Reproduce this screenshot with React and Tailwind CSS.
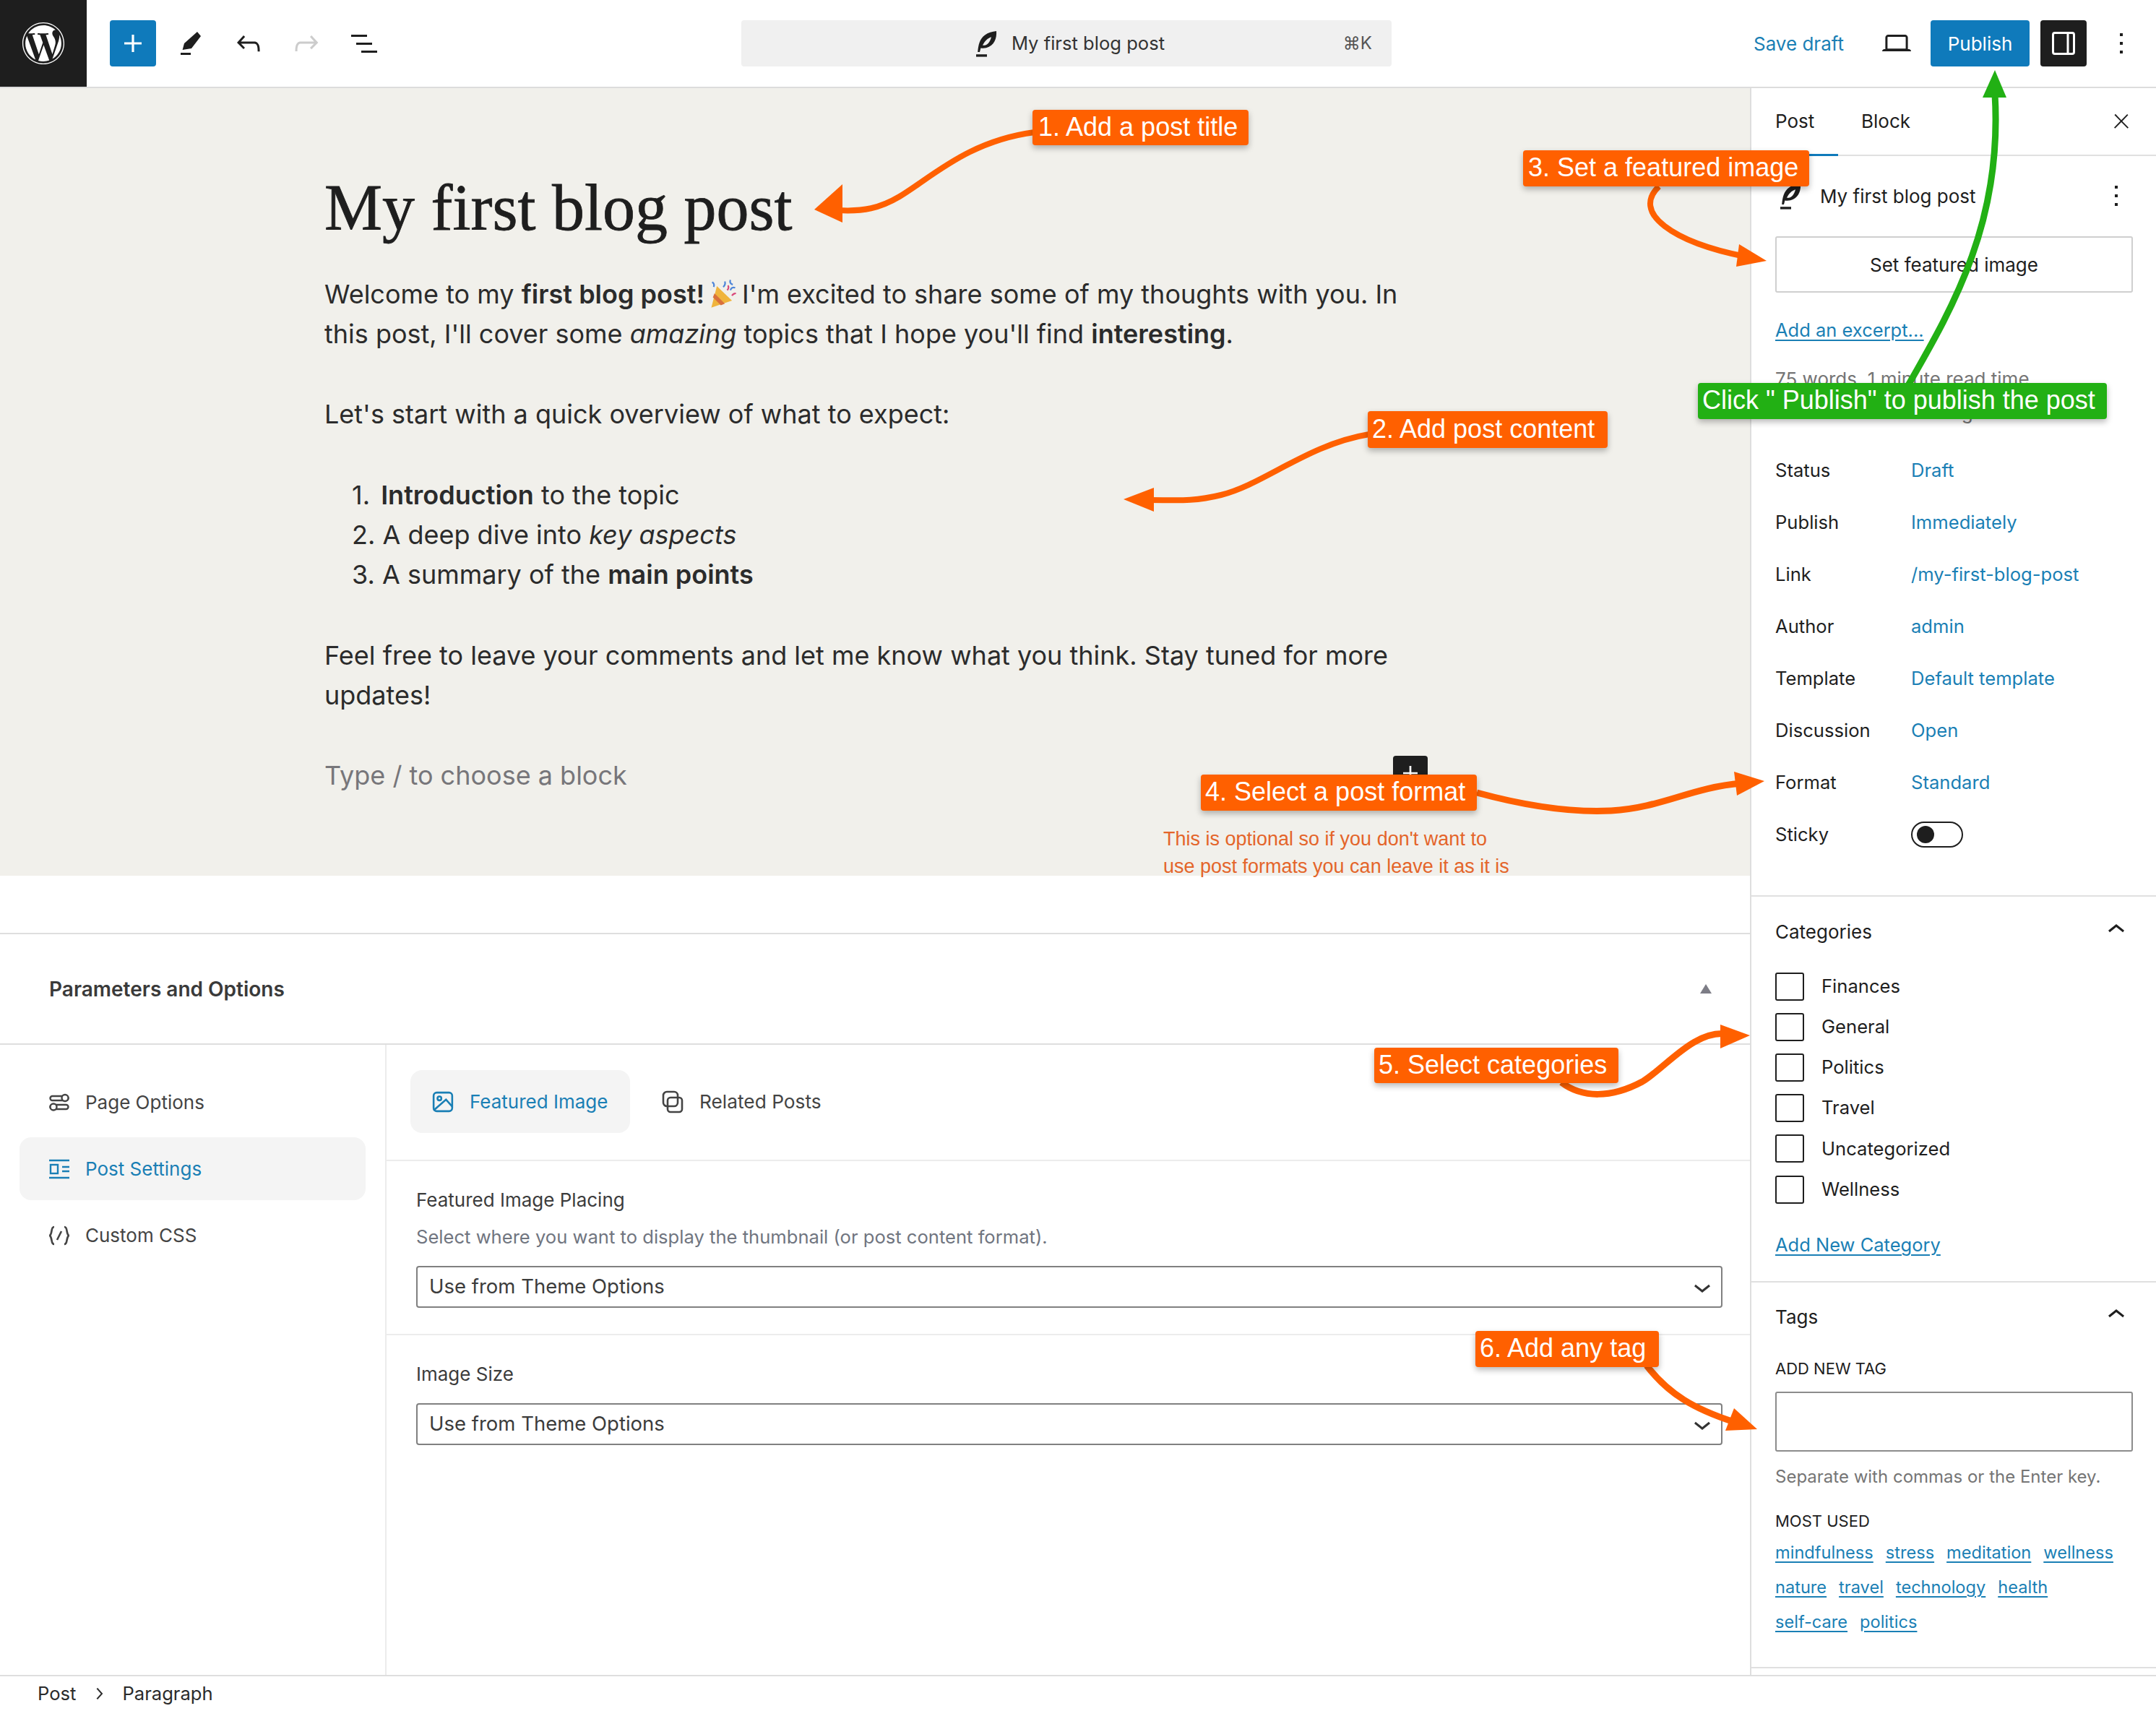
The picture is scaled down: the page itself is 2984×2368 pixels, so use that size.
import React from 'react'
import { FaWordpress } from 'react-icons/fa'

const orange = '#ff6000'
const green = '#22b014'

function Icon({ d, className = 'w-12 h-12', fill = 'currentColor' }) {
    return (
        <svg viewBox="0 0 24 24" className={className} fill={fill}>
            <path d={d} />
        </svg>
    )
}

const paths = {
    plus: 'M18 11.2h-5.2V6h-1.6v5.2H6v1.6h5.2V18h1.6v-5.2H18z',
    pencil: 'M16.5 4 19 7 12.5 15.5 6.3 16.5 7.5 12ZM5 18.5h7V20H5Z',
    undo: 'M18.3 11.7c-.6-.6-1.4-.9-2.3-.9H6.7l2.9-3.3-1.1-1-4.5 5L8.5 16l1-1-2.7-2.7H16c.5 0 .9.2 1.3.5 1 1 1 3.4 1 4.5v.3h1.5v-.2c0-1.5 0-4.3-1.5-5.7z',
    redo: 'M15.6 6.5l-1.1 1 2.9 3.3H8c-.9 0-1.7.3-2.3.9-1.4 1.5-1.4 4.2-1.4 5.6v.2h1.5v-.3c0-1.1 0-3.5 1-4.5.3-.3.7-.5 1.3-.5h9.2L14.5 15l1.1 1.1 4.6-4.6-4.6-5z',
    list: 'M3 6h11v1.5H3V6Zm3.5 5.5h11V13h-11v-1.5ZM21 17H10v1.5h11V17Z',
    laptop: 'M20.5 16h-.7V8c0-1.1-.9-2-2-2H6.2c-1.1 0-2 .9-2 2v8h-.7c-.8 0-1.5.7-1.5 1.5h20c0-.8-.7-1.5-1.5-1.5zM5.7 8c0-.3.2-.5.5-.5h11.6c.3 0 .5.2.5.5v7.6H5.7V8z',
    dots: 'M13 19h-2v-2h2v2zm0-6h-2v-2h2v2zm0-6h-2V5h2v2z',
    close: 'M13 11.8l6.1-6.3-1-1-6.1 6.2-6.1-6.3-1 1 6.1 6.3-6.5 6.7 1 1 6.5-6.6 6.5 6.6 1-1z',
    up: 'M6.5 12.4L12 8l5.5 4.4-.9 1.2L12 10l-4.5 3.6-1-1.2z',
    down: 'M17.5 11.6L12 16l-5.5-4.4.9-1.2L12 14l4.5-3.6 1 1.2z',
    right: 'M10.6 6 9.4 7l4.6 5-4.6 5 1.2 1 5.4-6z',
}

function Feather({ className }) {
    return (
        <svg viewBox="0 0 24 24" className={className}>
            <path fillRule="evenodd" fill="#1e1e1e" d="M19.5 3.5c.4 5-1.4 10.2-7 11.6-1.3.3-2.6.3-3.8.1L8 18H6.6C7 13 8 8.8 11.6 6.2c2.2-1.6 5-2.4 7.9-2.7ZM16 7.6c-2.6.8-4.6 2.8-6 5.8 2.8.3 5-1.7 6-5.8Z" />
            <path fill="#1e1e1e" d="M5.5 19.6h7.5v1.7H5.5z" />
        </svg>
    )
}

function SidebarToggle() {
    return (
        <svg viewBox="0 0 24 24" className="w-12 h-12" fill="none" stroke="#fff" strokeWidth="1.5">
            <rect x="4.75" y="4.75" width="14.5" height="14.5" rx="1.2" />
            <path d="M15 4.75v14.5" />
        </svg>
    )
}

function PartyPopper() {
    return (
        <svg viewBox="0 0 40 36" className="inline-block w-[44px] h-[40px] align-[-6px] mx-[4px]">
            <path d="M12 9 31 27 5 36Z" fill="#f0b43c" />
            <path d="M9 18 22 31l-5 2L7 23Z" fill="#d9703c" />
            <path d="M22 3c1 3 0 5-2 7M29 1c-1 3 0 5 3 6M35 11c-3-1-5 0-6 3M6 4c2 1 3 3 2 6" stroke="#4f86d9" strokeWidth="2" fill="none" />
            <path d="M26 8c1 2 1 4-1 6M36 18c-2 0-4 1-5 3" stroke="#d9487a" strokeWidth="2" fill="none" />
        </svg>
    )
}

function Callout({ className, children }) {
    return (
        <div className={`absolute flex items-center whitespace-nowrap rounded-[4px] text-white text-[36px] font-['Liberation_Sans',Arial,sans-serif] shadow-[0_4px_8px_rgba(0,0,0,0.28)] ${className}`}>
            {children}
        </div>
    )
}

function Arrows() {
    return (
        <svg className="absolute left-0 top-0 w-[2984px] h-[2368px] pointer-events-none" viewBox="0 0 2984 2368" fill="none">
            <g stroke={orange} strokeWidth="8">
                <path d="M1432 183C1340 195 1290 245 1245 272C1218 288 1195 293 1160 291" />
                <path d="M1895 601C1810 615 1750 670 1690 685C1650 695 1625 692 1590 692" />
                <path d="M2296 258C2278 275 2280 295 2304 313C2330 333 2370 346 2415 355" />
                <path d="M2044 1097C2110 1115 2170 1125 2230 1122C2300 1118 2340 1090 2410 1084" strokeWidth="9" />
                <path d="M2161 1498C2190 1520 2230 1520 2273 1497C2305 1478 2345 1425 2390 1431" strokeWidth="9" />
                <path d="M2279 1890C2310 1930 2345 1950 2400 1968" strokeWidth="9" />
            </g>
            <g fill={orange}>
                <path d="M1127 290 1166 255 1166 308Z" />
                <path d="M1555 691 1597 675 1597 708Z" />
                <path d="M2445 361 2407 338 2403 369Z" />
                <path d="M2442 1081 2400 1068 2404 1101Z" />
                <path d="M2422 1433 2381 1418 2381 1451Z" />
                <path d="M2432 1978 2400 1949 2388 1980Z" />
            </g>
            <path d="M2640 535C2700 430 2772 310 2761 130" stroke={green} strokeWidth="9" />
            <path d="M2761 97 2744 135 2777 135Z" fill={green} />
        </svg>
    )
}

function TopBar() {
    return (
        <header className="flex h-[122px] shrink-0 border-b-2 border-[#dcdcdc] text-[#1e1e1e]">
            <div className="flex w-[120px] h-[120px] items-center justify-center bg-[#1e1e1e] text-white">
                <FaWordpress className="w-[60px] h-[60px]" />
            </div>
            <div className="flex flex-1 items-center pl-[32px] pr-[24px] h-[120px]">
                <div className="flex items-center gap-4 w-[874px]">
                    <button className="flex w-16 h-16 items-center justify-center rounded-[4px] bg-[#0f7abb] text-white"><Icon d={paths.plus} /></button>
                    <button className="flex w-16 h-16 items-center justify-center"><Icon d={paths.pencil} /></button>
                    <button className="flex w-16 h-16 items-center justify-center"><Icon d={paths.undo} /></button>
                    <button className="flex w-16 h-16 items-center justify-center text-[#cccccc]"><Icon d={paths.redo} /></button>
                    <button className="flex w-16 h-16 items-center justify-center"><Icon d={paths.list} /></button>
                </div>
                <div className="relative flex w-[900px] h-16 items-center justify-center gap-[12px] rounded-[4px] bg-[#f0f0f0] text-[25.6px]">
                    <Feather className="w-12 h-12" />
                    <span className="text-[#333]">My first blog post</span>
                    <span className="absolute right-[27px] text-[24px] text-[#555]">⌘K</span>
                </div>
                <div className="flex flex-1 items-center justify-end">
                    <span className="text-[26px] text-[#1a7fb5] mr-[49px]">Save draft</span>
                    <Icon d={paths.laptop} className="w-12 h-12 mr-[23px]" />
                    <button className="flex w-[137px] h-16 items-center justify-center rounded-[4px] bg-[#0f7abb] text-white text-[26px]">Publish</button>
                    <button className="flex w-16 h-16 ml-[15px] items-center justify-center rounded-[4px] bg-[#1e1e1e]"><SidebarToggle /></button>
                    <Icon d={paths.dots} className="w-12 h-12 ml-[24px]" />
                </div>
            </div>
        </header>
    )
}

function Editor() {
    return (
        <div className="h-[1090px] shrink-0 overflow-hidden bg-[#f1f0eb] pl-[449px] text-[#2b2b2b]">
            <h1 className="mt-[116px] h-[100px] text-[90px] leading-[100px] font-normal text-[#1e1e1e] [-webkit-text-stroke:0.8px_#1e1e1e] font-['Liberation_Serif',serif]">My first blog post</h1>
            <div className="w-[1520px] mt-[42px] text-[36px] leading-[55px]">
                <p className="w-[1500px]">Welcome to my <b className="font-semibold">first blog post!</b><PartyPopper />I'm excited to share some of my thoughts with you. In this post, I'll cover some <i>amazing</i> topics that I hope you'll find <b className="font-semibold">interesting</b>.</p>
                <p className="mt-[56px]">Let's start with a quick overview of what to expect:</p>
                <ol className="mt-[57px] pl-[38px]">
                    <li>1. <b className="ml-[5px] font-semibold">Introduction</b> to the topic</li>
                    <li>2. A deep dive into <i>key aspects</i></li>
                    <li>3. A summary of the <b className="font-semibold">main points</b></li>
                </ol>
                <p className="mt-[57px] w-[1500px]">Feel free to leave your comments and let me know what you think. Stay tuned for more updates!</p>
                <p className="mt-[56px] text-[#77767a]">Type / to choose a block</p>
            </div>
        </div>
    )
}

function NavItem({ icon, label, active }) {
    return (
        <div className={`flex h-[87px] items-center gap-[22px] rounded-[16px] pl-[41px] text-[26px] ${active ? 'bg-[#f4f4f4] text-[#1a7fb5]' : 'text-[#444]'}`}>
            {icon}
            <span>{label}</span>
        </div>
    )
}

function Select() {
    return (
        <div className="flex h-[58px] items-center justify-between rounded-[4px] border-2 border-[#808080] pl-[16px] pr-[2px] text-[27.5px] text-[#3c3c3c]">
            <span>Use from Theme Options</span>
            <Icon d={paths.down} className="w-12 h-12 text-[#333]" />
        </div>
    )
}

function Options() {
    return (
        <div className="flex flex-1 flex-col border-t-2 border-[#dedede]">
            <div className="flex h-[153px] shrink-0 items-center justify-between border-b-2 border-[#dedede] pl-[68px] pr-[53px]">
                <span className="text-[28px] font-semibold text-[#3a3a3a]">Parameters and Options</span>
                <svg viewBox="0 0 16 13" className="w-4 h-[13px]"><path d="M8 0 16 13H0Z" fill="#7d7d86" /></svg>
            </div>
            <div className="flex flex-1">
                <nav className="flex w-[535px] shrink-0 flex-col gap-[5px] border-r-2 border-[#ececec] pt-[36px] pl-[27px] pr-[27px]">
                    <NavItem label="Page Options" icon={
                        <svg viewBox="0 0 28 28" className="w-7 h-7" fill="none" stroke="currentColor" strokeWidth="2.4">
                            <rect x="1.5" y="5" width="25" height="6" rx="3" /><circle cx="22" cy="7.5" r="4.5" fill="#fff" />
                            <rect x="1.5" y="17" width="25" height="6" rx="3" /><circle cx="6" cy="20" r="4.5" fill="#fff" />
                        </svg>} />
                    <NavItem active label="Post Settings" icon={
                        <svg viewBox="0 0 28 28" className="w-7 h-7" fill="none" stroke="currentColor" strokeWidth="2.4">
                            <path d="M0 2h28M0 26h28M18 11h10M18 17h10" /><rect x="2" y="8" width="10" height="12" />
                        </svg>} />
                    <NavItem label="Custom CSS" icon={
                        <svg viewBox="0 0 28 28" className="w-7 h-7" fill="none" stroke="currentColor" strokeWidth="2.6">
                            <path d="M7 2C2 2 5 10 1 14c4 4 1 12 6 12M21 2c5 0 2 8 6 12-4 4-1 12-6 12M17 8l-6 12" />
                        </svg>} />
                </nav>
                <div className="flex-1 pr-[38px]">
                    <div className="-mr-[38px] flex h-[161px] items-start gap-[22px] border-b-2 border-[#ececec] pl-[33px] pt-[35px]">
                        <div className="flex h-[87px] w-[304px] items-center gap-[22px] rounded-[16px] bg-[#f4f4f4] pl-[30px] text-[26px] text-[#1a7fb5]">
                            <svg viewBox="0 0 28 28" className="w-[30px] h-[30px]" fill="none" stroke="currentColor" strokeWidth="2.4">
                                <rect x="2" y="2" width="24" height="24" rx="4" /><circle cx="9.5" cy="9.5" r="2.5" /><path d="M2 25 18 11l8 9" />
                            </svg>
                            <span>Featured Image</span>
                        </div>
                        <div className="flex h-[87px] items-center gap-[22px] pl-[22px] text-[26.3px] text-[#444]">
                            <svg viewBox="0 0 30 32" className="w-[30px] h-[32px]" fill="none" stroke="currentColor" strokeWidth="2.6">
                                <rect x="2" y="2" width="20" height="20" rx="5" /><rect x="8" y="10" width="20" height="20" rx="4" />
                            </svg>
                            <span>Related Posts</span>
                        </div>
                    </div>
                    <div className="-mr-[38px] h-[241px] border-b-2 border-[#ececec] pl-[41px] pr-[38px] pt-[36px]">
                        <div className="text-[26px] leading-[36px] text-[#3c3c3c]">Featured Image Placing</div>
                        <div className="mt-[15px] text-[25.6px] leading-[36px] text-[#70757f]">Select where you want to display the thumbnail (or post content format).</div>
                        <div className="mt-[22px]"><Select /></div>
                    </div>
                    <div className="-mr-[38px] pl-[41px] pr-[38px] pt-[36px]">
                        <div className="text-[26px] leading-[36px] text-[#3c3c3c]">Image Size</div>
                        <div className="mt-[22px]"><Select /></div>
                    </div>
                </div>
            </div>
        </div>
    )
}

function MetaRow({ label, value, children }) {
    return (
        <div className="flex h-[72px] items-center text-[25.6px]">
            <span className="w-[188px] text-[#1e1e1e]">{label}</span>
            {value && <span className="text-[#1a7fb5]">{value}</span>}
            {children}
        </div>
    )
}

function Sidebar() {
    const categories = ['Finances', 'General', 'Politics', 'Travel', 'Uncategorized', 'Wellness']
    const tagRows = [
        ['mindfulness', 'stress', 'meditation', 'wellness'],
        ['nature', 'travel', 'technology', 'health'],
        ['self-care', 'politics'],
    ]
    return (
        <aside className="w-[562px] shrink-0 overflow-hidden border-l-2 border-[#dedede] text-[26px] text-[#1e1e1e]">
            <div className="relative flex h-[94px] items-center border-b-2 border-[#e0e0e0] pl-[33px] pb-[1px]">
                <span className="w-[119px]">Post</span>
                <span>Block</span>
                <div className="absolute left-[33px] -bottom-[2px] w-[87px] h-[3px] bg-[#0f7abb]" />
                <Icon d={paths.close} className="absolute right-[32px] top-[30px] w-8 h-8" />
            </div>
            <div className="h-[1025px] border-b-2 border-[#e0e0e0] pl-[33px] pr-[31px] pt-[31px]">
                <div className="flex h-[48px] items-center justify-between">
                    <div className="flex items-center gap-[18px] -ml-[4px]">
                        <Feather className="w-12 h-12" />
                        <span>My first blog post</span>
                    </div>
                    <Icon d={paths.dots} className="w-12 h-12" />
                </div>
                <button className="mt-[32px] flex h-[78px] w-[495px] items-center justify-center rounded-[3px] border-2 border-[#cfcfcf] text-[26px]">Set featured image</button>
                <div className="mt-[36px] h-[32px] leading-[32px] text-[25.5px] text-[#1a7fb5] underline underline-offset-4">Add an excerpt...</div>
                <div className="mt-[36px] h-[32px] leading-[32px] text-[#757575]">75 words, 1 minute read time</div>
                <div className="mt-[14px] h-[32px] leading-[32px] text-[#757575]">Last edited 2 hours ago.</div>
                <div className="mt-[28px]">
                    <MetaRow label="Status" value="Draft" />
                    <MetaRow label="Publish" value="Immediately" />
                    <MetaRow label="Link" value="/my-first-blog-post" />
                    <MetaRow label="Author" value="admin" />
                    <MetaRow label="Template" value="Default template" />
                    <MetaRow label="Discussion" value="Open" />
                    <MetaRow label="Format" value="Standard" />
                    <MetaRow label="Sticky">
                        <div className="flex h-[36px] w-[72px] items-center rounded-full border-2 border-[#1e1e1e] pl-[6px]">
                            <div className="h-[24px] w-[24px] rounded-full bg-[#1e1e1e]" />
                        </div>
                    </MetaRow>
                </div>
            </div>
            <div className="h-[534px] border-b-2 border-[#e0e0e0] pl-[33px] pr-[31px] pt-[24px]">
                <div className="flex h-[48px] items-center justify-between">
                    <span>Categories</span>
                    <Icon d={paths.up} className="w-12 h-12 -mt-[4px]" />
                </div>
                <div className="mt-[24px]">
                    {categories.map(c => (
                        <div key={c} className="flex h-[56.2px] items-center gap-[24px] text-[25.6px]">
                            <div className="h-[39px] w-[40px] rounded-[3px] border-2 border-[#1e1e1e]" />
                            <span>{c}</span>
                        </div>
                    ))}
                </div>
                <div className="mt-[30px] text-[25.5px] text-[#1a7fb5] underline underline-offset-4">Add New Category</div>
            </div>
            <div className="h-[534px] border-b-2 border-[#e0e0e0] pl-[33px] pr-[31px] pt-[23px]">
                <div className="flex h-[48px] items-center justify-between">
                    <span>Tags</span>
                    <Icon d={paths.up} className="w-12 h-12 -mt-[4px]" />
                </div>
                <div className="mt-[33px] text-[22px] leading-[30px]">ADD NEW TAG</div>
                <div className="mt-[17px] h-[83px] w-[495px] rounded-[3px] border-2 border-[#8c8c8c]" />
                <div className="mt-[19px] text-[24px] leading-[32px] text-[#757575]">Separate with commas or the Enter key.</div>
                <div className="mt-[30px] text-[22px] leading-[30px]">MOST USED</div>
                <div className="mt-[5px]">
                    {tagRows.map((row, i) => (
                        <div key={i} className="flex h-[48px] items-center gap-[17px] text-[23.6px] text-[#1a7fb5]">
                            {row.map(t => <span key={t} className="underline underline-offset-4">{t}</span>)}
                        </div>
                    ))}
                </div>
            </div>
        </aside>
    )
}

function App() {
    return (
        <div className="relative flex h-[2368px] w-[2984px] flex-col overflow-hidden bg-white font-['Inter',sans-serif]">
            <TopBar />
            <main className="flex min-h-0 flex-1">
                <div className="flex min-w-0 flex-1 flex-col">
                    <Editor />
                    <div className="h-[79px] shrink-0" />
                    <Options />
                </div>
                <Sidebar />
            </main>
            <footer className="flex h-[50px] shrink-0 items-center border-t-2 border-[#dedede] pl-[52px] text-[25.6px] text-[#2b2b2b]">
                <span>Post</span>
                <Icon d={paths.right} className="w-8 h-8 ml-[16px] mr-[16px]" />
                <span>Paragraph</span>
            </footer>

            {/* block inserter that peeks out behind callout 4 */}
            <div className="absolute left-[1928px] top-[1046px] flex h-[48px] w-[48px] items-center justify-center rounded-[4px] bg-[#1e1e1e] text-white">
                <Icon d={paths.plus} className="w-10 h-10" />
            </div>

            <div className="absolute left-[1610px] top-[1142px] whitespace-nowrap text-[27px] leading-[38px] text-[#e4652a] font-['Liberation_Sans',Arial,sans-serif]">
                <div>This is optional so if you don't want to</div>
                <div>use post formats you can leave it as it is</div>
            </div>

            <Arrows />

            <Callout className="left-[1429px] top-[152px] w-[299px] h-[49px] pl-[8px] pb-[2px] bg-[#ff6000]">1. Add a post title</Callout>
            <Callout className="left-[1893px] top-[569px] w-[332px] h-[51px] pl-[6px] pb-[2px] bg-[#ff6000]">2. Add post content</Callout>
            <Callout className="left-[2108px] top-[208px] w-[396px] h-[50px] pl-[7px] pb-[2px] bg-[#ff6000]">3. Set a featured image</Callout>
            <Callout className="left-[1662px] top-[1072px] w-[382px] h-[50px] pl-[6px] pb-[2px] bg-[#ff6000]">4. Select a post format</Callout>
            <Callout className="left-[1902px] top-[1450px] w-[338px] h-[49px] pl-[6px] pb-[2px] bg-[#ff6000]">5. Select categories</Callout>
            <Callout className="left-[2042px] top-[1842px] w-[254px] h-[50px] pl-[6px] pb-[2px] bg-[#ff6000]">6. Add any tag</Callout>
            <Callout className="left-[2350px] top-[530px] w-[566px] h-[50px] pl-[6px] pb-[2px] bg-[#22b014]">Click " Publish" to publish the post</Callout>
        </div>
    )
}

export default App
